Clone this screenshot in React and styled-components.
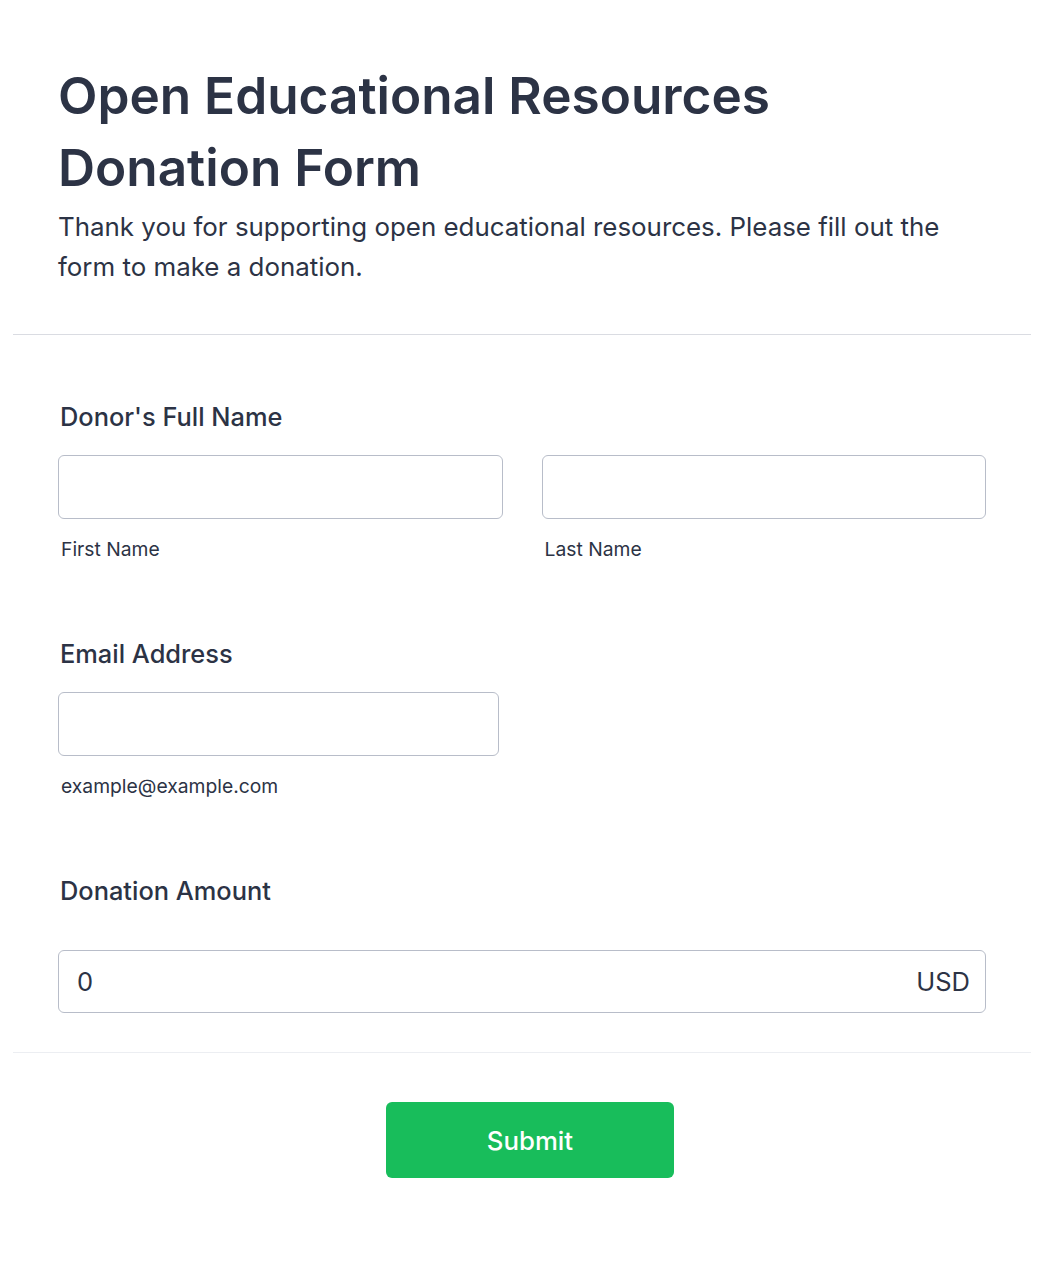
import React from "react";
import styled, { createGlobalStyle } from "styled-components";

const GlobalStyle = createGlobalStyle`
	body {
		margin: 0;
		background: #ffffff;
		font-family: Inter, "Noto Sans", sans-serif;
		color: #2c3345;
	}
`;

const Page = styled.div`
	padding: 0 13px;
`;

const Header = styled.header`
	padding: 59px 45px 47px;
	border-bottom: 1px solid #dadce2;
`;

const Title = styled.h1`
	margin: 0;
	font-size: 51.3px;
	line-height: 72px;
	font-weight: 600;
	color: #2c3345;
`;

const Subtitle = styled.p`
	margin: 4px 0 0;
	font-size: 25.9px;
	line-height: 40px;
	font-weight: 400;
`;

const Fields = styled.div`
	padding: 0 45px 39px;
	border-bottom: 1px solid #eceef2;
`;

const Field = styled.div`
	padding-top: ${(p) => (p.$first ? "64px" : "73px")};
`;

const Label = styled.label`
	display: block;
	padding-left: 2px;
	font-size: 25.4px;
	line-height: 36px;
	font-weight: 500;
	margin-bottom: ${(p) => (p.$wide ? "41px" : "20px")};
`;

const Row = styled.div`
	display: grid;
	grid-template-columns: 1fr 1fr;
	gap: 39px;
`;

const Input = styled.input`
	box-sizing: border-box;
	display: block;
	width: ${(p) => p.$width || "100%"};
	height: 64px;
	border: 1px solid #b8bdc9;
	border-radius: 6px;
	padding: 0 18px;
	font-family: inherit;
	font-size: 25.5px;
	color: #2c3345;
	background: #fff;
`;

const SubLabel = styled.span`
	display: block;
	margin-top: 17px;
	padding-left: 3px;
	font-size: 19.3px;
	line-height: 27px;
	color: #2c3345;
`;

const AmountBox = styled.div`
	box-sizing: border-box;
	display: flex;
	align-items: center;
	justify-content: space-between;
	height: 63px;
	border: 1px solid #b8bdc9;
	border-radius: 6px;
	padding: 0 15px 0 18px;
	font-size: 25.5px;
`;

const Footer = styled.div`
	display: flex;
	justify-content: center;
	padding: 49px 0 100px 16px;
`;

const SubmitButton = styled.button`
	width: 288px;
	height: 76px;
	border: none;
	border-radius: 6px;
	background: #18bd5b;
	color: #fff;
	font-family: inherit;
	font-size: 25.8px;
	font-weight: 500;
	cursor: pointer;
`;

const App = () => (
	<Page>
		<GlobalStyle />
		<Header>
			<Title>
				Open Educational Resources
				<br />
				Donation Form
			</Title>
			<Subtitle>
				Thank you for supporting open educational resources. Please fill out
				the form to make a donation.
			</Subtitle>
		</Header>
		<Fields>
			<Field $first>
				<Label>Donor's Full Name</Label>
				<Row>
					<div>
						<Input />
						<SubLabel>First Name</SubLabel>
					</div>
					<div>
						<Input />
						<SubLabel>Last Name</SubLabel>
					</div>
				</Row>
			</Field>
			<Field>
				<Label>Email Address</Label>
				<Input $width="441px" />
				<SubLabel>example@example.com</SubLabel>
			</Field>
			<Field>
				<Label $wide>Donation Amount</Label>
				<AmountBox>
					<span>0</span>
					<span>USD</span>
				</AmountBox>
			</Field>
		</Fields>
		<Footer>
			<SubmitButton>Submit</SubmitButton>
		</Footer>
	</Page>
);

export default App;
